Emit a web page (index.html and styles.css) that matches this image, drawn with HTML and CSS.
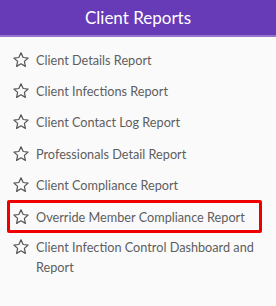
FILE: index.html
```html
<!DOCTYPE html>
<html lang="en">

<head>
  <meta charset="UTF-8">
  <title>Client Reports</title>
  <link rel="stylesheet" href="styles.css">
</head>

<body>

  <section class="reports">
    <h2 class="reports-title">Client Reports</h2>

    <ul class="report-list">
      <li class="report-item">
        <svg class="star" viewBox="0 0 24 24"><path d="M12 2.5l2.9 6.2 6.6.7-5 4.5 1.4 6.6L12 17.1l-5.9 3.4 1.4-6.6-5-4.5 6.6-.7z"/></svg>
        <span>Client Details Report</span>
      </li>
      <li class="report-item">
        <svg class="star" viewBox="0 0 24 24"><path d="M12 2.5l2.9 6.2 6.6.7-5 4.5 1.4 6.6L12 17.1l-5.9 3.4 1.4-6.6-5-4.5 6.6-.7z"/></svg>
        <span>Client Infections Report</span>
      </li>
      <li class="report-item">
        <svg class="star" viewBox="0 0 24 24"><path d="M12 2.5l2.9 6.2 6.6.7-5 4.5 1.4 6.6L12 17.1l-5.9 3.4 1.4-6.6-5-4.5 6.6-.7z"/></svg>
        <span>Client Contact Log Report</span>
      </li>
      <li class="report-item">
        <svg class="star" viewBox="0 0 24 24"><path d="M12 2.5l2.9 6.2 6.6.7-5 4.5 1.4 6.6L12 17.1l-5.9 3.4 1.4-6.6-5-4.5 6.6-.7z"/></svg>
        <span>Professionals Detail Report</span>
      </li>
      <li class="report-item">
        <svg class="star" viewBox="0 0 24 24"><path d="M12 2.5l2.9 6.2 6.6.7-5 4.5 1.4 6.6L12 17.1l-5.9 3.4 1.4-6.6-5-4.5 6.6-.7z"/></svg>
        <span>Client Compliance Report</span>
      </li>
      <li class="report-item highlighted">
        <svg class="star" viewBox="0 0 24 24"><path d="M12 2.5l2.9 6.2 6.6.7-5 4.5 1.4 6.6L12 17.1l-5.9 3.4 1.4-6.6-5-4.5 6.6-.7z"/></svg>
        <span>Override Member Compliance Report</span>
      </li>
      <li class="report-item">
        <svg class="star" viewBox="0 0 24 24"><path d="M12 2.5l2.9 6.2 6.6.7-5 4.5 1.4 6.6L12 17.1l-5.9 3.4 1.4-6.6-5-4.5 6.6-.7z"/></svg>
        <span>Client Infection Control Dashboard and Report</span>
      </li>
    </ul>
  </section>

</body>

</html>
```

FILE: styles.css
```css
body {
  margin: 0;
  font-family: Lato, "Open Sans", sans-serif;
  background: #fafafa;
  color: #5e5e5e;
}

/* Panel */
.reports {
  width: 276px;
  height: 306px;
  background: #fafafa;
}

.reports-title {
  margin: 0;
  height: 35px;
  line-height: 36px;
  background: #673ab7;
  border-bottom: 2px solid #9575cd;
  color: #fff;
  font-size: 17px;
  font-weight: normal;
  text-align: center;
}

/* Report list */
.report-list {
  list-style: none;
  margin: 0;
  padding: 10px 14px 0 7px;
  display: flex;
  flex-direction: column;
  gap: 5.2px;
}

.report-item {
  display: flex;
  align-items: flex-start;
  gap: 6px;
  padding: 0 2px;
  font-size: 12.7px;
  line-height: 20px;
  border: 3px solid transparent;
  border-radius: 2px;
}

.report-item.highlighted {
  border-color: #ee0000;
  padding-top: 4px;
  padding-bottom: 3px;
  margin: -3px 0 -4px 0;
}

.star {
  flex: none;
  width: 18px;
  height: 18px;
  margin-top: 1px;
  fill: none;
  stroke: #555;
  stroke-width: 1.6;
  stroke-linejoin: round;
}
```
